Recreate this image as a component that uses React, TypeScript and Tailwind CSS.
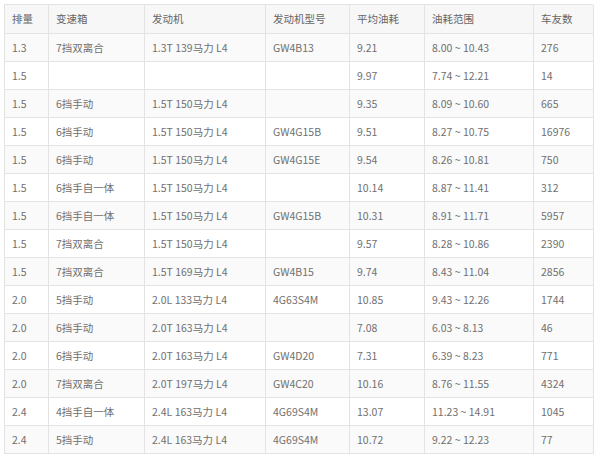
import React from "react";

const header = ["排量", "变速箱", "发动机", "发动机型号", "平均油耗", "油耗范围", "车友数"];
const rows: string[][] = [
  ["1.3", "7挡双离合", "1.3T 139马力 L4", "GW4B13", "9.21", "8.00 ~ 10.43", "276"],
  ["1.5", "", "", "", "9.97", "7.74 ~ 12.21", "14"],
  ["1.5", "6挡手动", "1.5T 150马力 L4", "", "9.35", "8.09 ~ 10.60", "665"],
  ["1.5", "6挡手动", "1.5T 150马力 L4", "GW4G15B", "9.51", "8.27 ~ 10.75", "16976"],
  ["1.5", "6挡手动", "1.5T 150马力 L4", "GW4G15E", "9.54", "8.26 ~ 10.81", "750"],
  ["1.5", "6挡手自一体", "1.5T 150马力 L4", "", "10.14", "8.87 ~ 11.41", "312"],
  ["1.5", "6挡手自一体", "1.5T 150马力 L4", "GW4G15B", "10.31", "8.91 ~ 11.71", "5957"],
  ["1.5", "7挡双离合", "1.5T 150马力 L4", "", "9.57", "8.28 ~ 10.86", "2390"],
  ["1.5", "7挡双离合", "1.5T 169马力 L4", "GW4B15", "9.74", "8.43 ~ 11.04", "2856"],
  ["2.0", "5挡手动", "2.0L 133马力 L4", "4G63S4M", "10.85", "9.43 ~ 12.26", "1744"],
  ["2.0", "6挡手动", "2.0T 163马力 L4", "", "7.08", "6.03 ~ 8.13", "46"],
  ["2.0", "6挡手动", "2.0T 163马力 L4", "GW4D20", "7.31", "6.39 ~ 8.23", "771"],
  ["2.0", "7挡双离合", "2.0T 197马力 L4", "GW4C20", "10.16", "8.76 ~ 11.55", "4324"],
  ["2.4", "4挡手自一体", "2.4L 163马力 L4", "4G69S4M", "13.07", "11.23 ~ 14.91", "1045"],
  ["2.4", "5挡手动", "2.4L 163马力 L4", "4G69S4M", "10.72", "9.22 ~ 12.23", "77"],
];

const font = { fontFamily: '"Noto Sans CJK SC", "Noto Sans", sans-serif' };

export default function App() {
  return (
    <div className="w-[600px] h-[460px] bg-white pt-[4px] pl-[4px] overflow-hidden" style={font}>
      <div className="w-[589px] border-l border-t border-[#e3e3e3] grid grid-cols-[44px_96px_121px_84px_75px_109px_60px] text-[10.5px] text-[#707070]">
        {header.map((h, i) => (
          <div
            key={"h" + i}
            className="h-[29px] flex items-center pl-[7px] border-r border-b border-[#e3e3e3] bg-[#f7f7f7] text-[#666] whitespace-nowrap"
          >
            {h}
          </div>
        ))}
        {rows.map((r, ri) =>
          r.map((c, ci) => (
            <div
              key={ri + "-" + ci}
              className={
                "h-[28px] flex items-center pl-[7px] border-r border-b border-[#e3e3e3] whitespace-nowrap " +
                (ri % 2 === 0 ? "bg-[#fafafa]" : "bg-white")
              }
            >
              {c}
            </div>
          ))
        )}
      </div>
    </div>
  );
}
